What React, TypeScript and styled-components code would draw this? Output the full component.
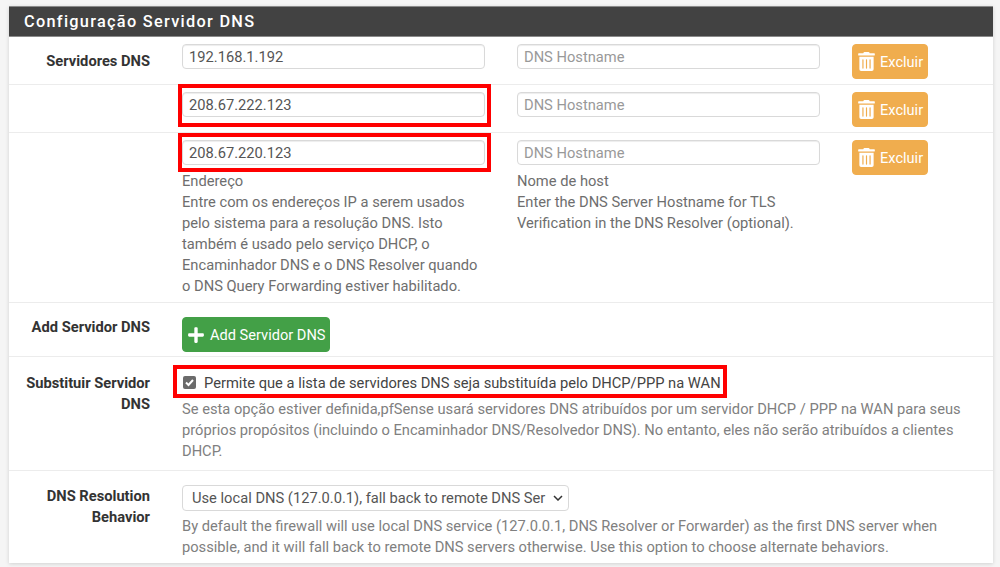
import styled, { createGlobalStyle } from "styled-components";
import { FaTrashAlt, FaPlus } from "react-icons/fa";

const GlobalStyle = createGlobalStyle`
  html, body {
    margin: 0;
    padding: 0;
    background: #f5f5f5;
    overflow: hidden;
  }
  * { box-sizing: border-box; }
`;

const Page = styled.div`
  width: 1000px;
  height: 567px;
  padding: 6px 7px 0 9px;
  font-family: Roboto, "Liberation Sans", sans-serif;
  font-size: 14.7px;
  color: #555;
`;

const Panel = styled.div`
  background: #fff;
  box-shadow: 0 1px 4px rgba(0, 0, 0, 0.15);
`;

const PanelTitle = styled.div`
  height: 31px;
  padding-left: 15px;
  background: #424242;
  border-top: 1px solid #8a8a8a;
  border-bottom: 1px solid #8a8a8a;
  color: #fff;
  font-size: 16.3px;
  font-weight: 500;
  letter-spacing: 1.3px;
  line-height: 29px;
`;

const Row = styled.div<{ $height: number; $last?: boolean }>`
  display: flex;
  height: ${(p) => p.$height}px;
  padding-top: 7px;
  border-bottom: ${(p) => (p.$last ? "none" : "1px solid #ececec")};
`;

const Label = styled.div<{ $top: number }>`
  width: 141px;
  margin-right: 32px;
  padding-top: ${(p) => p.$top}px;
  color: #333;
  font-weight: 700;
  line-height: 21px;
  text-align: right;
`;

const Column = styled.div<{ $width?: number }>`
  position: relative;
  width: ${(p) => (p.$width ? `${p.$width}px` : "auto")};
  margin-right: ${(p) => (p.$width ? "32px" : "0")};
`;

const Content = styled.div`
  position: relative;
  width: 786px;
`;

const TextInput = styled.input`
  display: block;
  width: 100%;
  height: 25px;
  padding: 1px 6px 0;
  border: 1px solid #d9d9d9;
  border-radius: 4px;
  box-shadow: inset 0 1px 1px rgba(0, 0, 0, 0.075);
  background: #fff;
  color: #555;
  font: inherit;
  &::placeholder {
    color: #999;
    opacity: 1;
  }
`;

const Help = styled.div`
  margin-top: 6px;
  color: #6e6e6e;
  line-height: 21px;
`;

const HelpLight = styled.div<{ $top: number }>`
  margin-top: ${(p) => p.$top}px;
  color: #808080;
  line-height: 21px;
`;

const Button = styled.button<{ $color: string; $top?: number }>`
  display: inline-flex;
  align-items: center;
  height: 35px;
  margin-top: ${(p) => p.$top ?? 0}px;
  padding: 0 4px;
  border: 1px solid ${(p) => p.$color};
  border-radius: 4px;
  background: ${(p) => p.$color};
  color: #fff;
  font-family: inherit;
  font-size: 14.6px;
`;

const ButtonIcon = styled.span<{ $gap: number }>`
  display: inline-flex;
  margin-right: ${(p) => p.$gap}px;
`;

const Highlight = styled.div<{ $top: number; $left: number; $width: number; $height: number }>`
  position: absolute;
  top: ${(p) => p.$top}px;
  left: ${(p) => p.$left}px;
  width: ${(p) => p.$width}px;
  height: ${(p) => p.$height}px;
  border: 4px solid #f00;
  pointer-events: none;
`;

const CheckRow = styled.label`
  display: flex;
  align-items: center;
  height: 21px;
  margin-top: 8px;
  color: #444;
`;

const Check = styled.span`
  display: inline-flex;
  align-items: center;
  justify-content: center;
  width: 13px;
  height: 13px;
  margin-left: 1px;
  margin-right: 8px;
  border-radius: 2px;
  background: #6b6b6b;
`;

const Select = styled.div`
  display: flex;
  align-items: center;
  justify-content: space-between;
  width: 387px;
  height: 26px;
  margin-top: 7px;
  padding: 0 5px 0 9px;
  border: 1px solid #d9d9d9;
  border-radius: 4px;
  color: #555;
  white-space: nowrap;
`;

const servers = [
  { ip: "192.168.1.192", height: 48 },
  { ip: "208.67.222.123", height: 48 },
  { ip: "208.67.220.123", height: 170 },
];

export default function App() {
  return (
    <Page>
      <GlobalStyle />
      <Panel>
        <PanelTitle>Configuração Servidor DNS</PanelTitle>
        {servers.map((server, i) => (
          <Row key={server.ip} $height={server.height}>
            <Label $top={7}>{i === 0 ? "Servidores DNS" : ""}</Label>
            <Column $width={303}>
              <TextInput defaultValue={server.ip} />
              {i === 1 && <Highlight $top={-8} $left={-4} $width={313} $height={43} />}
              {i === 2 && <Highlight $top={-7} $left={-4} $width={313} $height={39} />}
              {i === 2 && (
                <Help>
                  Endereço
                  <br />
                  Entre com os endereços IP a serem usados
                  <br />
                  pelo sistema para a resolução DNS. Isto
                  <br />
                  também é usado pelo serviço DHCP, o
                  <br />
                  Encaminhador DNS e o DNS Resolver quando
                  <br />o DNS Query Forwarding estiver habilitado.
                </Help>
              )}
            </Column>
            <Column $width={303}>
              <TextInput placeholder="DNS Hostname" />
              {i === 2 && (
                <Help>
                  Nome de host
                  <br />
                  Enter the DNS Server Hostname for TLS
                  <br />
                  Verification in the DNS Resolver (optional).
                </Help>
              )}
            </Column>
            <Column>
              <Button $color="#f0ad4e">
                <ButtonIcon $gap={4}>
                  <FaTrashAlt size={19} />
                </ButtonIcon>
                Excluir
              </Button>
            </Column>
          </Row>
        ))}
        <Row $height={54}>
          <Label $top={7}>Add Servidor DNS</Label>
          <Content>
            <Button $color="#43a047" $top={7}>
              <ButtonIcon $gap={5}>
                <FaPlus size={18} />
              </ButtonIcon>
              Add Servidor DNS
            </Button>
          </Content>
        </Row>
        <Row $height={114}>
          <Label $top={9}>Substituir Servidor DNS</Label>
          <Content>
            <CheckRow>
              <Check>
                <svg width="11" height="11" viewBox="0 0 11 11">
                  <path d="M2 5.5 L4.5 8 L9 3" fill="none" stroke="#fff" strokeWidth="2" />
                </svg>
              </Check>
              Permite que a lista de servidores DNS seja substituída pelo DHCP/PPP na WAN
            </CheckRow>
            <Highlight $top={1} $left={-9} $width={554} $height={33} />
            <HelpLight $top={6}>
              Se esta opção estiver definida,pfSense usará servidores DNS atribuídos por um servidor DHCP / PPP na WAN para seus
              <br />
              próprios propósitos (incluindo o Encaminhador DNS/Resolvedor DNS). No entanto, eles não serão atribuídos a clientes
              <br />
              DHCP.
            </HelpLight>
          </Content>
        </Row>
        <Row $height={92} $last>
          <Label $top={8}>DNS Resolution Behavior</Label>
          <Content>
            <Select>
              Use local DNS (127.0.0.1), fall back to remote DNS Ser
              <svg width="10" height="6" viewBox="0 0 10 6">
                <path d="M1 1 L5 5 L9 1" fill="none" stroke="#333" strokeWidth="1.5" />
              </svg>
            </Select>
            <HelpLight $top={5}>
              By default the firewall will use local DNS service (127.0.0.1, DNS Resolver or Forwarder) as the first DNS server when
              <br />
              possible, and it will fall back to remote DNS servers otherwise. Use this option to choose alternate behaviors.
            </HelpLight>
          </Content>
        </Row>
      </Panel>
    </Page>
  );
}
